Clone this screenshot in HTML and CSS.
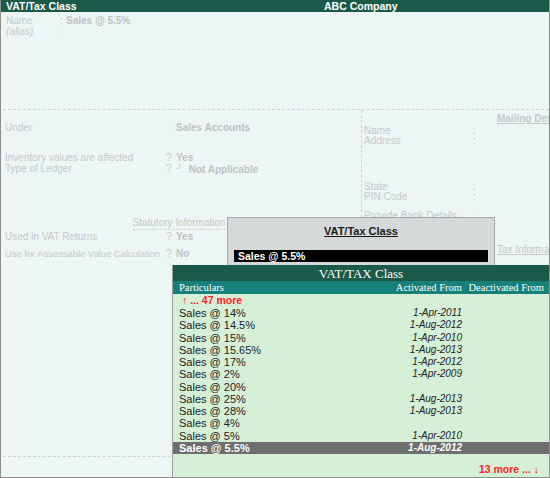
FILE: index.html
```html
<!DOCTYPE html>
<html>
<head>
<meta charset="utf-8">
<link rel="stylesheet" href="styles.css">
</head>
<body>
<div class="app">
  <header class="titlebar">
    <span class="t-left">VAT/Tax Class</span>
    <span class="t-center">ABC Company</span>
  </header>

  <main class="form">
    <section class="top">
      <div class="trow"><span>Name</span><span>:</span><b>Sales @ 5.5%</b></div>
      <div class="trow"><i>(alias)</i><span>:</span><span></span></div>
    </section>

    <section class="cols">
      <div class="col-left">
        <div class="lrow r-under"><span>Under</span><span class="sep">:</span><b>Sales Accounts</b></div>
        <div class="lrow r-inv"><span>Inventory values are affected</span><span class="q">?</span><b>Yes</b></div>
        <div class="lrow"><span>Type of Ledger</span><span class="q">?</span><b><span class="corner">┘</span>Not Applicable</b></div>
        <div class="stat-title"><span>Statutory Information</span></div>
        <div class="lrow r-vat"><span>Used in VAT Returns</span><span class="q">?</span><b>Yes</b></div>
        <div class="lrow r-ass"><span class="small">Use for Assessable Value Calculation</span><span class="q">?</span><b>No</b></div>
      </div>
      <div class="col-right">
        <div class="rhead r-mail"><span>Mailing Details</span></div>
        <div class="rrow r-name"><span>Name</span><span>:</span></div>
        <div class="rrow"><span>Address</span><span>:</span></div>
        <div class="rrow r-state"><span>State</span><span>:</span></div>
        <div class="rrow"><span>PIN Code</span><span>:</span></div>
        <div class="rrow r-bank"><span>Provide Bank Details</span><span>:</span></div>
        <div class="rhead r-tax"><span>Tax Information</span></div>
      </div>
    </section>
    <div class="bottom-line"></div>
  </main>

  <div class="popup-search">
    <div class="ps-title"><span>VAT/Tax Class</span></div>
    <div class="ps-input">Sales @ 5.5%</div>
  </div>

  <div class="popup-list">
    <div class="pl-head">VAT/TAX Class</div>
    <div class="pl-cols"><span>Particulars</span><span class="ar">Activated From</span><span class="ar">Deactivated From</span></div>
    <div class="pl-more-up"><span class="arrow">↑</span> ... 47 more</div>
    <div class="pl-items">
      <div class="item"><span>Sales @ 14%</span><span class="date">1-Apr-2011</span><span></span></div>
      <div class="item"><span>Sales @ 14.5%</span><span class="date">1-Aug-2012</span><span></span></div>
      <div class="item"><span>Sales @ 15%</span><span class="date">1-Apr-2010</span><span></span></div>
      <div class="item"><span>Sales @ 15.65%</span><span class="date">1-Aug-2013</span><span></span></div>
      <div class="item"><span>Sales @ 17%</span><span class="date">1-Apr-2012</span><span></span></div>
      <div class="item"><span>Sales @ 2%</span><span class="date">1-Apr-2009</span><span></span></div>
      <div class="item"><span>Sales @ 20%</span><span class="date"></span><span></span></div>
      <div class="item"><span>Sales @ 25%</span><span class="date">1-Aug-2013</span><span></span></div>
      <div class="item"><span>Sales @ 28%</span><span class="date">1-Aug-2013</span><span></span></div>
      <div class="item"><span>Sales @ 4%</span><span class="date"></span><span></span></div>
      <div class="item"><span>Sales @ 5%</span><span class="date">1-Apr-2010</span><span></span></div>
      <div class="item selected"><span>Sales @ 5.5%</span><span class="date">1-Aug-2012</span><span></span></div>
    </div>
    <div class="pl-more-down">13 more ... <span class="arrow">↓</span></div>
  </div>
</div>
</body>
</html>
```

FILE: styles.css
```css
body {
  margin: 0;
}

.app {
  position: relative;
  width: 550px;
  height: 478px;
  box-sizing: border-box;
  border: 1px solid #8e8e8e;
  border-top: 0;
  background: #edf6f4;
  overflow: hidden;
  font-family: "Liberation Sans", Arial, sans-serif;
}

/* title bar */
.titlebar {
  display: flex;
  height: 12px;
  padding-left: 5px;
  background: #1b5a48;
  color: #ffffff;
  font-weight: bold;
  font-size: 10.5px;
  line-height: 12px;
  white-space: nowrap;
}
.t-left {
  width: 318px;
}

/* faded form */
.form {
  color: #c3cbcb;
  font-size: 10px;
}
.form b {
  color: #bcc4c4;
}

.top {
  height: 98px;
  box-sizing: border-box;
  padding-top: 3px;
  margin-left: 2px;
  border-bottom: 1px dashed #c9d5d8;
}
.trow {
  display: grid;
  grid-template-columns: 54px 6px 1fr;
  padding-left: 3px;
  line-height: 11px;
  height: 11px;
  font-size: 10px;
}

.cols {
  display: grid;
  grid-template-columns: 361px 1fr;
  height: 346px;
}

.col-left {
  border-right: 1px dashed #c9d5d8;
  padding-top: 12px;
}
.lrow {
  display: grid;
  grid-template-columns: 161px 10px 1fr;
  padding-left: 4px;
  height: 11px;
  line-height: 11px;
  white-space: nowrap;
}
.lrow .sep {
  padding-left: 3px;
}
.lrow .small {
  font-size: 9.4px;
}
.r-inv {
  margin-top: 19px;
}
.corner {
  font-size: 8px;
  vertical-align: 2px;
  margin-right: 6px;
  margin-left: 1px;
}
.stat-title {
  margin-top: 43px;
  padding-right: 4px;
  text-align: center;
  line-height: 11px;
  height: 11px;
}
.stat-title span {
  border-bottom: 1px dotted #c3cbcb;
  padding-bottom: 1px;
}
.r-vat {
  margin-top: 3px;
}
.r-ass {
  margin-top: 6px;
}

.col-right {
  padding-top: 3px;
  padding-left: 2px;
  white-space: nowrap;
}
.rhead {
  padding-left: 133px;
  line-height: 11px;
  height: 11px;
  font-weight: bold;
}
.rhead span {
  text-decoration: underline;
}
.r-tax {
  margin-top: 23px;
  font-weight: normal;
}
.rrow {
  display: grid;
  grid-template-columns: 109px 10px;
  line-height: 10px;
  height: 10px;
}
.r-name {
  margin-top: 2px;
}
.r-state {
  margin-top: 36px;
}
.r-bank {
  margin-top: 9px;
}

.bottom-line {
  margin-left: 2px;
  border-top: 1px dashed #c9d5d8;
}

/* search popup */
.popup-search {
  position: absolute;
  left: 226px;
  top: 217px;
  width: 268px;
  height: 60px;
  box-sizing: border-box;
  border: 1px solid #a3a8a8;
  background: #d5d9d9;
  padding: 7px 6px 0 6px;
}
.ps-title {
  text-align: center;
  font-weight: bold;
  font-size: 11px;
  line-height: 12px;
  height: 12px;
  color: #1a1a1a;
}
.ps-title span {
  text-decoration: underline;
}
.ps-input {
  margin-top: 13px;
  height: 12px;
  background: #000000;
  color: #ffffff;
  font-weight: bold;
  font-size: 10.5px;
  line-height: 12px;
  padding-left: 4px;
}

/* list popup */
.popup-list {
  position: absolute;
  left: 171px;
  top: 265px;
  right: 0;
  bottom: 0;
  border-left: 1px solid #9a9e9e;
  background: #d5f0d6;
  display: flex;
  flex-direction: column;
}
.pl-head {
  height: 16px;
  background: #1b5a48;
  color: #ffffff;
  text-align: center;
  font-family: "Liberation Serif", "Times New Roman", serif;
  font-size: 13px;
  line-height: 17px;
}
.pl-cols {
  display: grid;
  grid-template-columns: 1fr 90px 82px;
  height: 13px;
  padding: 0 5px 0 6px;
  background: #16807b;
  color: #ffffff;
  font-family: "Liberation Serif", "Times New Roman", serif;
  font-size: 10.5px;
  line-height: 13px;
}
.ar {
  text-align: right;
}
.pl-more-up {
  height: 13px;
  line-height: 13px;
  padding-left: 9px;
  color: #ff2424;
  font-weight: bold;
  font-size: 10.5px;
}
.arrow {
  font-weight: normal;
}
.pl-items {
  display: flex;
  flex-direction: column;
}
.item {
  display: grid;
  grid-template-columns: 1fr 90px 82px;
  height: 12.27px;
  line-height: 12px;
  padding: 0 5px 0 6px;
  font-size: 11px;
  color: #222226;
}
.date {
  text-align: right;
  font-style: italic;
  font-size: 10px;
}
.item.selected {
  background: #6e6e6e;
  color: #ffffff;
  font-weight: bold;
}
.pl-more-down {
  margin-top: auto;
  padding: 0 10px 1px 0;
  text-align: right;
  color: #ff2424;
  font-weight: bold;
  font-size: 10.5px;
  line-height: 13px;
}
```
